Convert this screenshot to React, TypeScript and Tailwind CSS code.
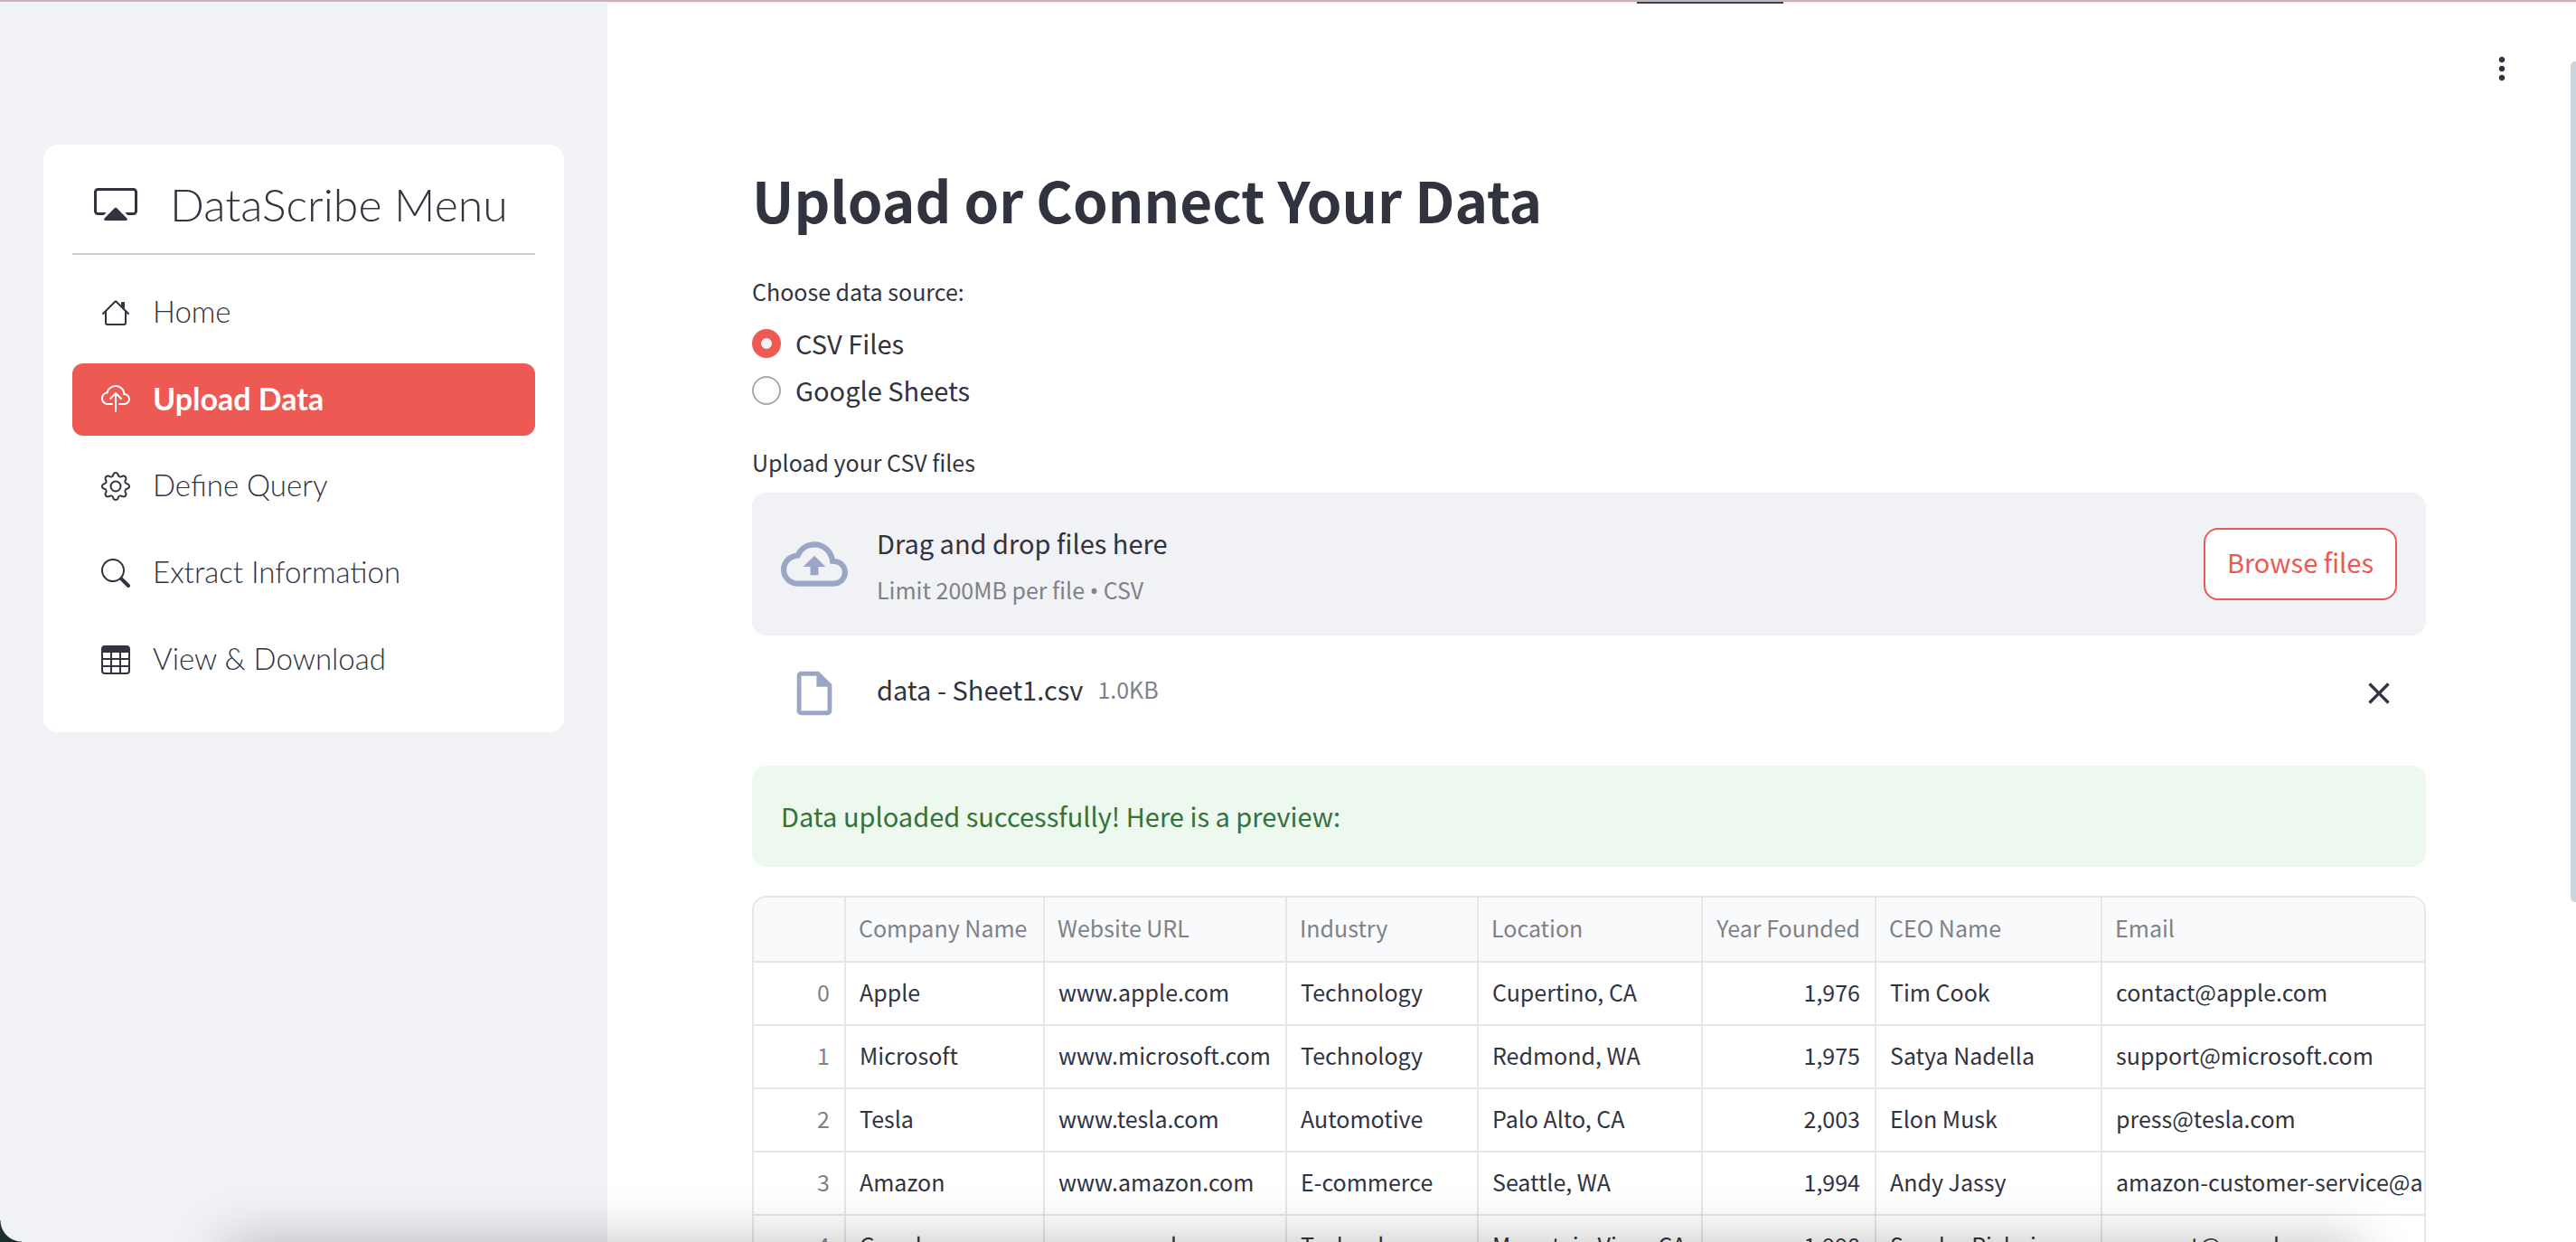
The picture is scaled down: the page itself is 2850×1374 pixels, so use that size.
import { useState } from "react";
import { BsCast, BsCloudUpload, BsGear, BsSearch, BsTable } from "react-icons/bs";
import { MdClose, MdMoreVert, MdOutlineCloudUpload, MdOutlineInsertDriveFile } from "react-icons/md";

function HouseIcon({ className }: { className?: string }) {
  return (
    <svg viewBox="0 0 16 16" fill="currentColor" className={className} aria-hidden="true">
      <path
        fillRule="evenodd"
        d="M2 13.5V7h1v6.5a.5.5 0 0 0 .5.5h9a.5.5 0 0 0 .5-.5V7h1v6.5a1.5 1.5 0 0 1-1.5 1.5h-9A1.5 1.5 0 0 1 2 13.5zm11-11V6l-2-2V2.5a.5.5 0 0 1 .5-.5h1a.5.5 0 0 1 .5.5z"
      />
      <path
        fillRule="evenodd"
        d="M7.293 1.5a1 1 0 0 1 1.414 0l6.647 6.646a.5.5 0 0 1-.708.708L8 2.207 1.354 8.854a.5.5 0 1 1-.708-.708L7.293 1.5z"
      />
    </svg>
  );
}

const menu = [
  { label: "Home", Icon: HouseIcon },
  { label: "Upload Data", Icon: BsCloudUpload, active: true },
  { label: "Define Query", Icon: BsGear },
  { label: "Extract Information", Icon: BsSearch },
  { label: "View & Download", Icon: BsTable },
];

const columns = [
  { label: "Company Name", width: "w-[220px]" },
  { label: "Website URL", width: "w-[268px]" },
  { label: "Industry", width: "w-[212px]" },
  { label: "Location", width: "w-[248px]" },
  { label: "Year Founded", width: "w-[192px]", numeric: true },
  { label: "CEO Name", width: "w-[250px]" },
  { label: "Email", width: "" },
];

const rows = [
  ["Apple", "www.apple.com", "Technology", "Cupertino, CA", "1,976", "Tim Cook", "contact@apple.com"],
  ["Microsoft", "www.microsoft.com", "Technology", "Redmond, WA", "1,975", "Satya Nadella", "support@microsoft.com"],
  ["Tesla", "www.tesla.com", "Automotive", "Palo Alto, CA", "2,003", "Elon Musk", "press@tesla.com"],
  ["Amazon", "www.amazon.com", "E-commerce", "Seattle, WA", "1,994", "Andy Jassy", "amazon-customer-service@amazon.com"],
  ["Google", "www.google.com", "Technology", "Mountain View, CA", "1,998", "Sundar Pichai", "support@google.com"],
];

function Sidebar() {
  return (
    <aside className="w-[672px] shrink-0 bg-[#f0f2f6] px-12 pt-40">
      <nav className="rounded-2xl bg-white px-8 pt-8 pb-10 font-['Lato',sans-serif] font-light">
        <div className="mb-6 flex h-[90px] items-center gap-9 border-b-2 border-[#cacacf] pb-5 pl-6">
          <BsCast className="size-12 shrink-0" />
          <h2 className="text-[50px] leading-[60px] whitespace-nowrap">DataScribe Menu</h2>
        </div>
        <ul className="flex flex-col gap-4">
          {menu.map(({ label, Icon, active }) => (
            <li key={label}>
              <a
                href="#"
                className={
                  active
                    ? "flex h-20 items-center gap-[25px] rounded-xl bg-[#ed5a53] pl-8 text-[34px] font-bold text-white"
                    : "flex h-20 items-center gap-[25px] rounded-xl pl-8 text-[33px]"
                }
              >
                <Icon className="size-8 shrink-0" />
                <span className="pb-[3px]">{label}</span>
              </a>
            </li>
          ))}
        </ul>
      </nav>
    </aside>
  );
}

function SourcePicker() {
  const [source, setSource] = useState("CSV Files");
  return (
    <fieldset className="mb-[33px]">
      <legend className="mb-3 text-[25px] leading-10">Choose data source:</legend>
      <div className="flex flex-col">
        {["CSV Files", "Google Sheets"].map((name) => (
          <label key={name} className="flex h-[52px] items-center gap-4 text-[29px]">
            <input
              type="radio"
              name="source"
              checked={source === name}
              onChange={() => setSource(name)}
              className="size-8 appearance-none rounded-full border-2 border-[#a9a9af] bg-white checked:border-[10px] checked:border-[#ed5a53] checked:bg-[#f0f2f6]"
            />
            {name}
          </label>
        ))}
      </div>
    </fieldset>
  );
}

function Uploader() {
  return (
    <section aria-labelledby="upload-label">
      <p id="upload-label" className="mb-[14px] text-[25px] leading-10">
        Upload your CSV files
      </p>
      <div className="flex h-[158px] items-center rounded-2xl bg-[#f0f2f6] px-8">
        <MdOutlineCloudUpload className="mr-8 size-[74px] text-[#9aa6c3]" />
        <div className="pt-1">
          <p className="text-[29px] leading-[52px]">Drag and drop files here</p>
          <p className="text-[25px] leading-[52px] text-[#808188]">
            Limit 200MB per file <span className="font-['Noto_Sans',sans-serif]">•</span> CSV
          </p>
        </div>
        <button
          type="button"
          className="ml-auto h-20 rounded-2xl border-2 border-[#ed5a53] bg-white px-6 pb-1 text-[29px] text-[#ed5a53]"
        >
          Browse files
        </button>
      </div>
      <div className="mb-12 flex h-24 items-center pt-8 pr-8 pl-10">
        <MdOutlineInsertDriveFile className="mr-10 size-[58px] text-[#9aa6c3]" />
        <p className="pb-2 text-[29px]">data - Sheet1.csv</p>
        <p className="ml-4 pb-2 text-[25px] text-[#808188]">1.0KB</p>
        <button type="button" aria-label="Remove file" className="ml-auto">
          <MdClose className="size-10" />
        </button>
      </div>
    </section>
  );
}

function Preview() {
  return (
    <div className="overflow-hidden rounded-2xl border-2 border-[#e6e7e9]">
      <table className="w-full table-fixed border-separate border-spacing-0 text-[25px]">
        <thead>
          <tr className="h-[72px] bg-[#f9fafc] text-left text-[#808188]">
            <th scope="col" aria-label="Index" className="w-[102px] border-r-2 border-b-2 border-[#e6e7e9]" />
            {columns.map(({ label, width, numeric }, i) => (
              <th
                key={label}
                scope="col"
                className={`${width} border-b-2 border-[#e6e7e9] pb-[2px] pl-[14px] font-normal whitespace-nowrap ${
                  numeric ? "pr-4 text-right" : ""
                } ${i < columns.length - 1 ? "border-r-2" : ""}`}
              >
                {label}
              </th>
            ))}
          </tr>
        </thead>
        <tbody>
          {rows.map((row, r) => (
            <tr key={row[0]} className="h-[70px]">
              <th
                scope="row"
                className="border-r-2 border-b-2 border-[#e6e7e9] pr-4 pb-[3px] text-right font-normal text-[#808188]"
              >
                {r}
              </th>
              {row.map((cell, i) => (
                <td
                  key={columns[i].label}
                  className={`overflow-hidden border-b-2 border-[#e6e7e9] pb-[3px] pl-[15px] whitespace-nowrap ${
                    columns[i].numeric ? "pr-4 text-right" : ""
                  } ${i < columns.length - 1 ? "border-r-2" : ""}`}
                >
                  {cell}
                </td>
              ))}
            </tr>
          ))}
        </tbody>
      </table>
    </div>
  );
}

export default function App() {
  return (
    <div className="relative flex h-screen overflow-hidden bg-white font-['Noto_Sans_CJK_SC',sans-serif] text-[#31333f]">
      <Sidebar />
      <main className="min-w-0 flex-1 px-40 pt-44 pr-[166px]">
        <h1 className="mb-[38px] text-[62px] leading-[88px] font-bold">Upload or Connect Your Data</h1>
        <SourcePicker />
        <Uploader />
        <p className="mb-8 flex h-28 items-center rounded-2xl bg-[#edf8ef] px-8 text-[29px] text-[#347238]">
          Data uploaded successfully! Here is a preview:
        </p>
        <Preview />
      </main>

      <button type="button" aria-label="Main menu" className="absolute top-14 right-[62px]">
        <MdMoreVert className="size-10" />
      </button>
      <div className="absolute top-[68px] -right-1 h-[930px] w-[10px] rounded-full bg-[#cbd5de]" />
      <div className="absolute inset-x-0 top-0 h-1 border-t-2 border-[#c9b3ba] bg-[#f6f2f4]" />
      <div className="absolute top-[2px] left-[1811px] h-[2px] w-[162px] bg-[#3b4153]" />
      <div className="pointer-events-none absolute top-full right-[240px] left-[250px] h-40 shadow-[0_0_60px_rgba(0,0,0,0.25)]" />
      <div className="pointer-events-none absolute bottom-0 left-0 size-6 bg-[radial-gradient(circle_at_top_right,transparent_23px,#1c2f30_24px)]" />
    </div>
  );
}
